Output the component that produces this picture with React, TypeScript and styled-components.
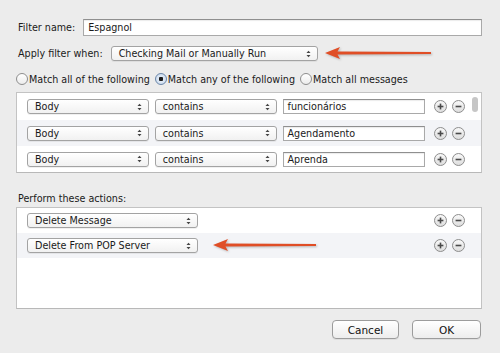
import * as React from 'react'
import styled, { createGlobalStyle } from 'styled-components'

const GlobalStyle = createGlobalStyle`
  html, body {
    margin: 0;
    padding: 0;
    background: #ececec;
  }
  body {
    font-family: "DejaVu Sans", "Noto Sans", sans-serif;
    font-size: 9.6px;
    color: #1a1a1a;
  }
`

const Sheet = styled.div`
  position: relative;
  width: 500px;
  height: 353px;
  box-sizing: border-box;
  padding: 19px 18px 0 16px;
  display: flex;
  flex-direction: column;
`

const FieldRow = styled.div<{ $mt?: number }>`
  display: flex;
  align-items: center;
  margin-top: ${(p) => p.$mt ?? 0}px;
  padding-left: 2px;
`

const Label = styled.span<{ $gap?: number }>`
  white-space: nowrap;
  margin-right: ${(p) => p.$gap ?? 9}px;
`

const TextField = styled.div<{ $w: number; $h?: number }>`
  width: ${(p) => p.$w}px;
  height: ${(p) => p.$h ?? 15}px;
  box-sizing: border-box;
  background: #fff;
  border: 1px solid #a9a9a9;
  border-top-color: #8f8f8f;
  box-shadow: inset 0 1px 1px rgba(0, 0, 0, 0.08);
  padding: 0 4px;
  display: flex;
  align-items: center;
  white-space: nowrap;
`

const Popup = styled.div<{ $w: number }>`
  width: ${(p) => p.$w}px;
  height: 15px;
  box-sizing: border-box;
  border: 1px solid #a3a3a3;
  border-radius: 3px;
  background: linear-gradient(#ffffff, #f1f1f1);
  box-shadow: 0 1px 0 rgba(0, 0, 0, 0.06);
  display: flex;
  align-items: center;
  justify-content: space-between;
  padding: 0 6px 0 7px;
  white-space: nowrap;
`

const Chevrons = () => (
  <svg width="5" height="8" viewBox="0 0 5 8">
    <path d="M0.5 3 L2.5 0.8 L4.5 3 Z" fill="#444" />
    <path d="M0.5 5 L2.5 7.2 L4.5 5 Z" fill="#444" />
  </svg>
)

const RadioRow = styled.div`
  display: flex;
  align-items: center;
  margin-top: 12px;
  gap: 5px;
`

const RadioItem = styled.label`
  display: flex;
  align-items: center;
  gap: 1px;
  white-space: nowrap;
`

const RadioDot = styled.span<{ $on?: boolean }>`
  width: 12px;
  height: 12px;
  box-sizing: border-box;
  border-radius: 50%;
  border: 1px solid ${(p) => (p.$on ? '#6b86a8' : '#8e8e8e')};
  background: ${(p) =>
    p.$on
      ? 'radial-gradient(circle, #1c1c1c 0 2px, #dfe9f5 2.5px, #c4d6ec 100%)'
      : 'linear-gradient(#ffffff, #ececec)'};
`

const ListBox = styled.div<{ $h: number; $mt: number }>`
  height: ${(p) => p.$h}px;
  margin-top: ${(p) => p.$mt}px;
  box-sizing: border-box;
  background: #fff;
  border: 1px solid #c3c3c3;
  border-bottom-color: #b8b8b8;
  position: relative;
  display: flex;
  flex-direction: column;
`

const ListRow = styled.div<{ $alt?: boolean; $h?: number }>`
  height: ${(p) => p.$h ?? 25}px;
  flex: none;
  display: flex;
  align-items: center;
  padding-left: 10px;
  padding-right: 16px;
  background: ${(p) => (p.$alt ? '#f3f4f7' : '#fff')};
  gap: 6px;
`

const RowButtons = styled.div<{ $ml?: number }>`
  display: flex;
  gap: 5px;
  margin-left: ${(p) => p.$ml ?? 3}px;
`

const Scroller = styled.div`
  position: absolute;
  right: 3px;
  top: 4px;
  width: 6px;
  height: 15px;
  border-radius: 3px;
  background: #c6c6c6;
`

const RoundButton = ({ kind }: { kind: 'add' | 'remove' }) => (
  <svg width="13" height="13" viewBox="0 0 13 13">
    <defs>
      <linearGradient id={`g-${kind}`} x1="0" y1="0" x2="0" y2="1">
        <stop offset="0" stopColor="#fafafa" />
        <stop offset="1" stopColor="#dcdcdc" />
      </linearGradient>
    </defs>
    <circle cx="6.5" cy="6.5" r="6" fill={`url(#g-${kind})`} stroke="#8d8d8d" strokeWidth="1" />
    <path d="M3.6 6.5 H9.4" stroke="#4a4a4a" strokeWidth="1.6" />
    {kind === 'add' && <path d="M6.5 3.6 V9.4" stroke="#4a4a4a" strokeWidth="1.6" />}
  </svg>
)

const SectionLabel = styled.div`
  margin-top: 20px;
  padding-left: 2px;
`

const Footer = styled.div`
  display: flex;
  justify-content: flex-end;
  gap: 13px;
  margin-top: 11px;
  padding-right: 1px;
`

const PushButton = styled.button<{ $w: number }>`
  width: ${(p) => p.$w}px;
  height: 19px;
  font-family: inherit;
  font-size: 10.5px;
  color: #111;
  border: 1px solid #9c9c9c;
  border-radius: 4px;
  background: linear-gradient(#ffffff, #ededed);
  box-shadow: 0 1px 0 rgba(0, 0, 0, 0.06);
  padding: 0;
`

const Arrow = styled.svg<{ $x: number; $y: number }>`
  position: absolute;
  left: ${(p) => p.$x}px;
  top: ${(p) => p.$y}px;
  overflow: visible;
`

const AnnotationArrow = ({ x, y, len }: { x: number; y: number; len: number }) => (
  <Arrow $x={x} $y={y} width={len} height="12" viewBox={`0 0 ${len} 12`}>
    <path
      d={`M0 6 L15 0 L12.5 4.6 L${len} 5 L${len} 7 L12.5 7.4 L15 12 Z`}
      fill="#e04e26"
      style={{ filter: 'drop-shadow(1px 1px 1px rgba(0,0,0,0.25))' }}
    />
  </Arrow>
)

const conditions = [
  { field: 'Body', op: 'contains', value: 'funcionários' },
  { field: 'Body', op: 'contains', value: 'Agendamento' },
  { field: 'Body', op: 'contains', value: 'Aprenda' },
]

const actions = ['Delete Message', 'Delete From POP Server']

const App = () => (
  <>
    <GlobalStyle />
    <Sheet>
      <FieldRow>
        <Label $gap={8}>Filter name:</Label>
        <TextField $w={400} $h={17}>
          Espagnol
        </TextField>
      </FieldRow>
      <FieldRow $mt={10}>
        <Label $gap={8}>Apply filter when:</Label>
        <Popup $w={207}>
          Checking Mail or Manually Run
          <Chevrons />
        </Popup>
      </FieldRow>
      <RadioRow>
        <RadioItem>
          <RadioDot />
          Match all of the following
        </RadioItem>
        <RadioItem>
          <RadioDot $on />
          Match any of the following
        </RadioItem>
        <RadioItem>
          <RadioDot />
          Match all messages
        </RadioItem>
      </RadioRow>
      <ListBox $h={81} $mt={7}>
        {conditions.map((c, i) => (
          <ListRow key={i} $alt={i % 2 === 1} $h={i === 0 ? 27 : 26}>
            <Popup $w={123}>
              {c.field}
              <Chevrons />
            </Popup>
            <Popup $w={123}>
              {c.op}
              <Chevrons />
            </Popup>
            <TextField $w={144}>{c.value}</TextField>
            <RowButtons>
              <RoundButton kind="add" />
              <RoundButton kind="remove" />
            </RowButtons>
          </ListRow>
        ))}
        <Scroller />
      </ListBox>
      <SectionLabel>Perform these actions:</SectionLabel>
      <ListBox $h={102} $mt={3}>
        {actions.map((a, i) => (
          <ListRow key={a} $alt={i % 2 === 1}>
            <Popup $w={172}>
              {a}
              <Chevrons />
            </Popup>
            <RowButtons $ml={230}>
              <RoundButton kind="add" />
              <RoundButton kind="remove" />
            </RowButtons>
          </ListRow>
        ))}
      </ListBox>
      <Footer>
        <PushButton $w={67}>Cancel</PushButton>
        <PushButton $w={69}>OK</PushButton>
      </Footer>
      <AnnotationArrow x={325} y={47} len={106} />
      <AnnotationArrow x={213} y={239} len={103} />
    </Sheet>
  </>
)

export default App
